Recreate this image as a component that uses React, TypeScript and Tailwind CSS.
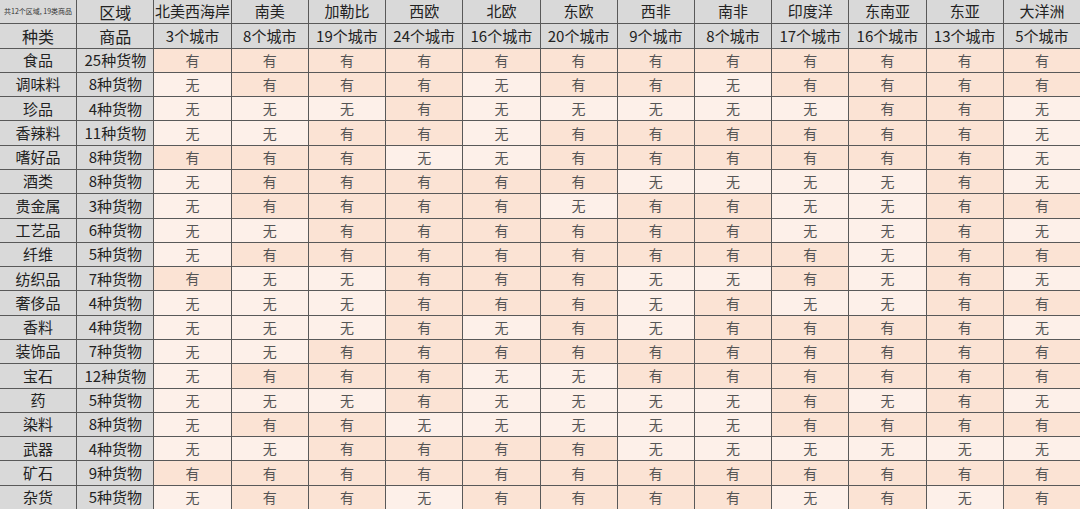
const regions = [
  { name: "北美西海岸", cities: 3 },
  { name: "南美", cities: 8 },
  { name: "加勒比", cities: 19 },
  { name: "西欧", cities: 24 },
  { name: "北欧", cities: 16 },
  { name: "东欧", cities: 20 },
  { name: "西非", cities: 9 },
  { name: "南非", cities: 8 },
  { name: "印度洋", cities: 17 },
  { name: "东南亚", cities: 16 },
  { name: "东亚", cities: 13 },
  { name: "大洋洲", cities: 5 },
];

// 1 = 有, 0 = 无 (one digit per region, in the order above)
const rows: [string, number, string][] = [
  ["食品", 25, "111111111111"],
  ["调味料", 8, "011101101111"],
  ["珍品", 4, "000100000110"],
  ["香辣料", 11, "001101111110"],
  ["嗜好品", 8, "111001111110"],
  ["酒类", 8, "011111000010"],
  ["贵金属", 3, "011110110011"],
  ["工艺品", 6, "001111110010"],
  ["纤维", 5, "011111111011"],
  ["纺织品", 7, "100111001010"],
  ["奢侈品", 4, "000111010011"],
  ["香料", 4, "000101011110"],
  ["装饰品", 7, "001111111111"],
  ["宝石", 12, "011100111111"],
  ["药", 5, "000100001010"],
  ["染料", 8, "011000001111"],
  ["武器", 4, "001111000000"],
  ["矿石", 9, "111111111111"],
  ["杂货", 5, "011011110101"],
];

const font = { fontFamily: '"Noto Sans CJK SC", "Noto Sans", sans-serif' };

export default function App() {
  return (
    <div className="w-[1080px] h-[509px] overflow-hidden bg-[#595959]" style={font}>
      <div className="grid h-full grid-cols-14 grid-rows-21 gap-px">
        <div className="flex items-center justify-center bg-[#d9d9d9] text-[7px] text-[#333]">共12个区域, 19类商品</div>
        <div className="flex items-center justify-center bg-[#d9d9d9] text-[16px] text-[#222]">区域</div>
        {regions.map((r) => (
          <div key={r.name} className="flex items-center justify-center bg-[#d9d9d9] text-[15px] text-[#222]">
            {r.name}
          </div>
        ))}

        <div className="flex items-center justify-center bg-[#d9d9d9] text-[16px] text-[#222]">种类</div>
        <div className="flex items-center justify-center bg-[#d9d9d9] text-[16px] text-[#222]">商品</div>
        {regions.map((r) => (
          <div key={r.name} className="flex items-center justify-center bg-[#d9d9d9] text-[15px] text-[#222]">
            {r.cities}个城市
          </div>
        ))}

        {rows.map(([cat, n, flags]) => (
          <Row key={cat} cat={cat} n={n} flags={flags} />
        ))}
      </div>
    </div>
  );
}

function Row({ cat, n, flags }: { cat: string; n: number; flags: string }) {
  return (
    <>
      <div className="flex items-center justify-center bg-[#d9d9d9] text-[15px] text-[#222]">{cat}</div>
      <div className="flex items-center justify-center bg-[#d9d9d9] text-[15px] text-[#222]">{n}种货物</div>
      {flags.split("").map((f, i) =>
        f === "1" ? (
          <div key={i} className="flex items-center justify-center bg-[#fbe3d4] text-[14px] text-[#555]">有</div>
        ) : (
          <div key={i} className="flex items-center justify-center bg-[#fdf0e9] text-[14px] text-[#555]">无</div>
        )
      )}
    </>
  );
}
